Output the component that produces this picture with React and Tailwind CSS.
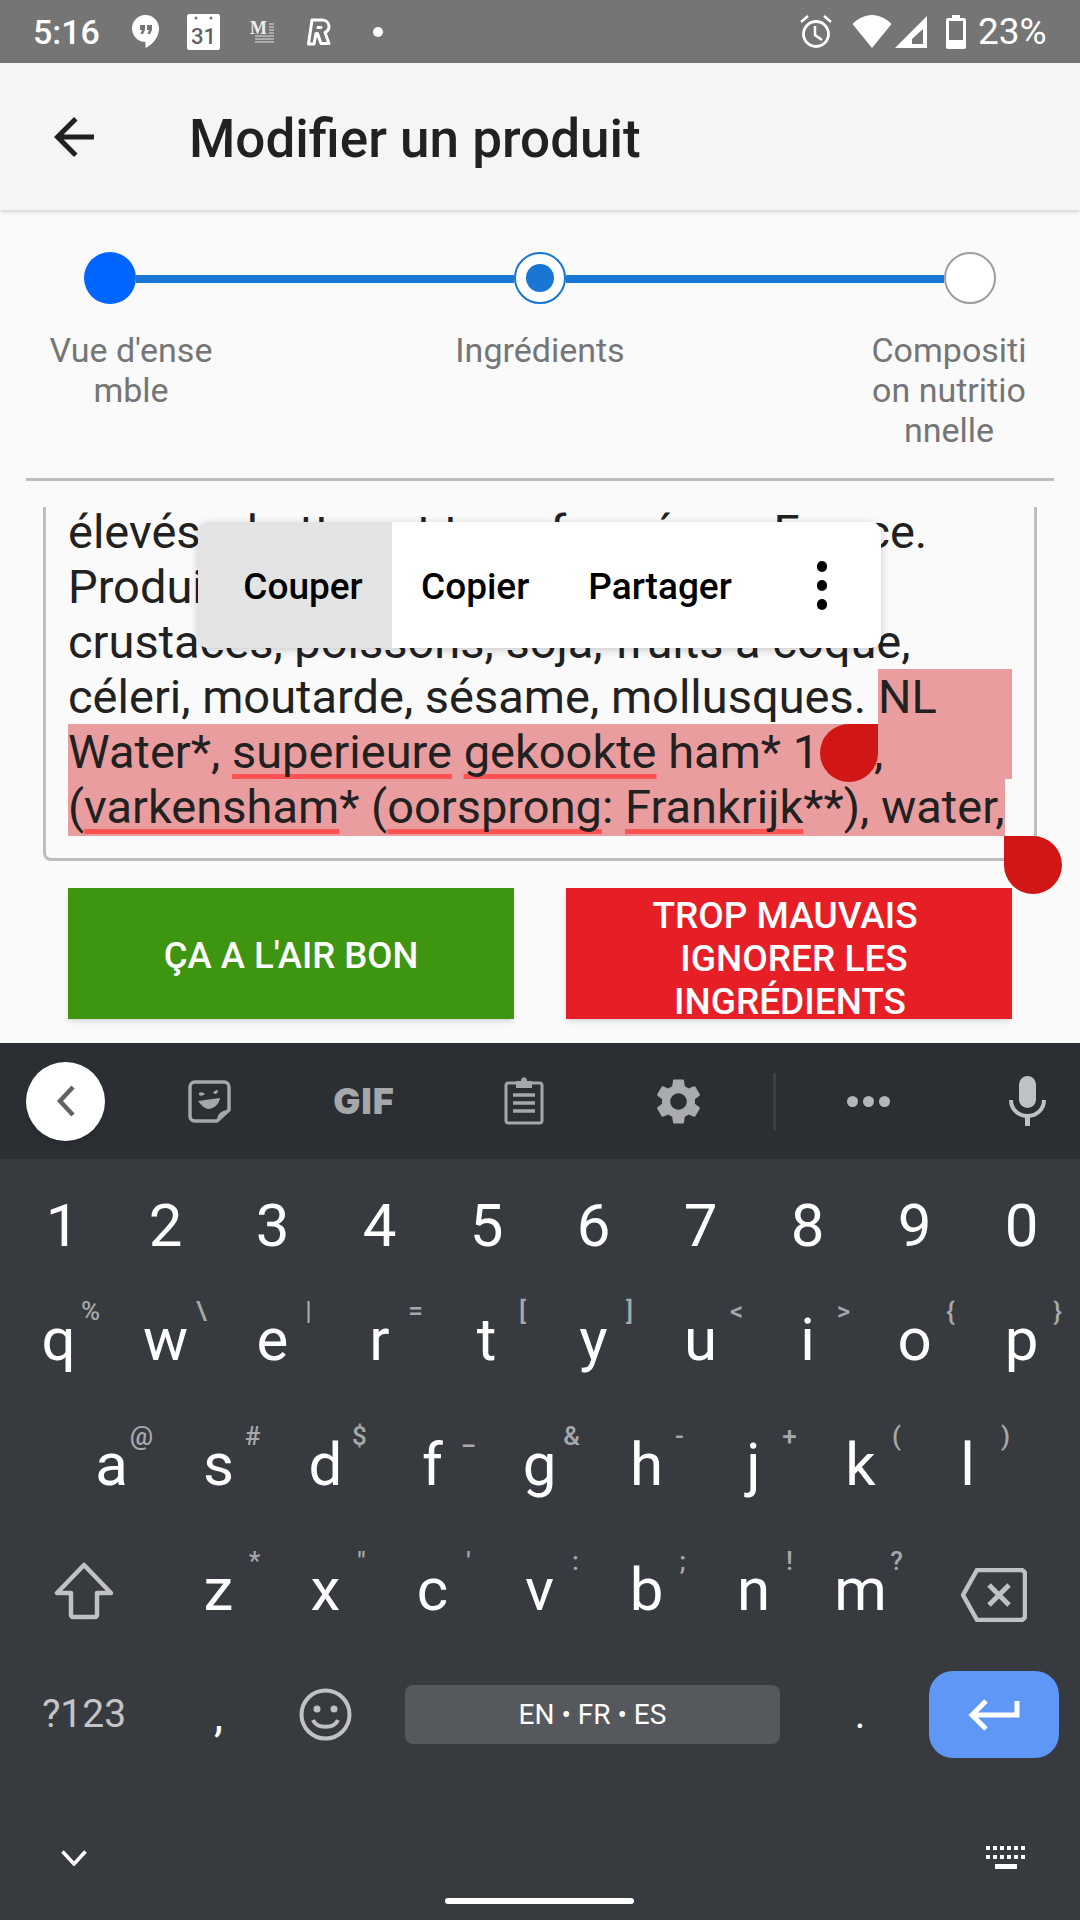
import React from 'react';

const FONT = { fontFamily: 'Roboto, sans-serif' };

const digits = ['1', '2', '3', '4', '5', '6', '7', '8', '9', '0'];
const row1 = [['q', '%', 'left-[calc(50%+32px)]'], ['w', '\\'], ['e', '|'], ['r', '='], ['t', '['], ['y', ']'], ['u', '<'], ['i', '>'], ['o', '{'], ['p', '}']];
const row2 = [['a', '@', 'left-[calc(50%+30px)]'], ['s', '#', 'left-[calc(50%+34px)]'], ['d', '$', 'left-[calc(50%+34px)]'], ['f', '_'], ['g', '&', 'left-[calc(50%+32px)]'], ['h', '-', 'left-[calc(50%+33px)]'], ['j', '+'], ['k', '('], ['l', ')', 'left-[calc(50%+38px)]']];
const row3 = [['z', '*'], ['x', '"'], ['c', "'"], ['v', ':'], ['b', ';'], ['n', '!'], ['m', '?']];

const Key = ({ label, hint, hintPos = 'left-[calc(50%+36px)]' }) => (
  <div className="relative w-[107px] h-full flex items-center justify-center text-[60px] text-white leading-none">
    {label}
    {hint && (
      <span className={`absolute ${hintPos} top-[20px] -translate-x-1/2 text-[26px] font-medium leading-[28px] text-[#a6a8aa]`}>
        {hint}
      </span>
    )}
  </div>
);

const Underlined = ({ children }) => (
  <span className="underline decoration-[#ff5252] decoration-[5px] underline-offset-[6px] [text-decoration-skip-ink:none]">
    {children}
  </span>
);

const StatusBar = () => (
  <div className="h-[63px] bg-[#757575] flex items-center text-white shrink-0">
    <span className="ml-[33px] w-[66px] text-[34px] font-medium leading-none">5:16</span>
    <svg className="ml-[33px]" width="27" height="33" viewBox="0 0 27 33">
      <path fill="#fff" d="M13.5 0C6 0 0 6 0 13.5S6 27 13.5 27v6c7-3.5 13.5-10.500 13.500-19.500C27 6 21 0 13.500 0z" />
      <path fill="#757575" d="M8 10h5v5l-2 4H8.500l1.500-4H8zM15 10h5v5l-2 4h-2.500l1.500-4h-2z" />
    </svg>
    <svg className="ml-[28px]" width="33" height="36" viewBox="0 0 33 36">
      <path fill="#fff" d="M2 0h29c1 0 2 1 2 2v32c0 1-1 2-2 2H2c-1 0-2-1-2-2V2c0-1 1-2 2-2z" />
      <circle cx="9" cy="4" r="1.500" fill="#757575" />
      <circle cx="24" cy="4" r="1.500" fill="#757575" />
      <text x="16.500" y="30" textAnchor="middle" fontSize="22" fontWeight="500" fill="#616161" fontFamily="Roboto, sans-serif">31</text>
    </svg>
    <svg className="ml-[30px]" width="24" height="24" viewBox="0 0 24 24">
      <text x="0" y="14" fontSize="18" fontWeight="700" fill="#eee" fontFamily="Liberation Serif, serif">M</text>
      <path stroke="#bdbdbd" strokeWidth="1.500" d="M19 4h5M19 7h5M19 10h5M19 13h5M5 16h19M5 19h19M5 22h19" />
    </svg>
    <svg className="ml-[33px]" width="24" height="28" viewBox="0 0 24 28">
      <path fill="none" stroke="#fff" strokeWidth="3" strokeLinejoin="round" d="M5 2h10c4 0 7 2.500 7 6.500 0 3-1.500 5-4 6l4 11h-8l-3.500-10H9L7 26H1.500z" />
      <path fill="#fff" d="M10 8h4c1 0 1.500.5 1.500 1.500S14 11 13 11H9.500z" />
    </svg>
    <span className="ml-[42px] w-[10px] h-[10px] rounded-full bg-white" />
    <svg className="ml-[417px]" width="32" height="33" viewBox="0 0 32 33">
      <path fill="none" stroke="#fff" strokeWidth="2.500" d="M1 7l7-6M31 7l-7-6" />
      <circle cx="16" cy="19" r="12.500" fill="none" stroke="#fff" strokeWidth="2.800" />
      <path fill="none" stroke="#fff" strokeWidth="2.500" d="M15 11v9l7 5" />
    </svg>
    <svg className="ml-[20px]" width="40" height="33" viewBox="0 0 40 33">
      <path fill="#fff" d="M20 33L0.500 9C6 3.500 12.500 0 20 0s14 3.500 19.500 9z" />
    </svg>
    <svg className="ml-[3px]" width="32" height="32" viewBox="0 0 32 32">
      <path fill="#fff" fillRule="evenodd" d="M0 32L32 0v32zM17 28h11V13l-11 10z" />
    </svg>
    <svg className="ml-[19px]" width="20" height="34" viewBox="0 0 20 34">
      <path fill="#fff" fillRule="evenodd" d="M6 0h8v3h4c1 0 2 1 2 2v27c0 1-1 2-2 2H2c-1 0-2-1-2-2V5c0-1 1-2 2-2h4zM3 6v19h14V6z" />
    </svg>
    <span className="ml-[12px] text-[37px] leading-none">23%</span>
  </div>
);

const AppBar = () => (
  <div className="relative z-10 h-[147px] bg-[#f5f5f5] shadow-[0_2px_4px_rgba(0,0,0,0.15)] flex items-center shrink-0">
    <svg className="ml-[44px]" width="60" height="60" viewBox="0 0 24 24">
      <path fill="#212121" d="M20 11H7.830l5.590-5.590L12 4l-8 8 8 8 1.410-1.410L7.830 13H20v-2z" />
    </svg>
    <h1 className="ml-[85px] mt-[5px] text-[53px] font-medium text-[#212121] leading-none">Modifier un produit</h1>
  </div>
);

const Stepper = () => (
  <div className="pt-[42px] shrink-0">
    <div className="flex items-center px-[84px]">
      <div className="w-[52px] h-[52px] rounded-full bg-[#0066ff]" />
      <div className="flex-1 h-[8px] mt-[2px] bg-[#1976d2]" />
      <div className="w-[52px] h-[52px] rounded-full border-2 border-[#1976d2] bg-white flex items-center justify-center">
        <div className="w-[28px] h-[28px] rounded-full bg-[#1976d2]" />
      </div>
      <div className="flex-1 h-[8px] mt-[2px] bg-[#1976d2]" />
      <div className="w-[52px] h-[52px] rounded-full border-2 border-[#9e9e9e] bg-white" />
    </div>
    <div className="mt-[26px] flex justify-between px-[40px] h-[120px] text-[34px] leading-[40px] text-[#757575] text-center">
      <div className="w-[182px]">Vue d'ense<br />mble</div>
      <div className="w-[182px]">Ingrédients</div>
      <div className="w-[182px]">Compositi<br />on nutritio<br />nnelle</div>
    </div>
  </div>
);

const TextArea = () => (
  <div className="mt-[26px] mx-[43px] h-[354px] border-x-[3px] border-b-[3px] border-[#bdbdbd] rounded-b-[8px] overflow-hidden text-[47px] leading-[55px] text-[#212121] shrink-0">
    <div className="-mt-[3px] ml-[22px] w-[944px] whitespace-pre">
      <div className="h-[55px]">élevés, abattus et transformés en France.</div>
      <div className="h-[55px]">Produit dans un atelier qui utilise :</div>
      <div className="h-[55px]">crustacés, poissons, soja, fruits à coque,</div>
      <div className="h-[55px] flex">
        <span className="w-[810px]">céleri, moutarde, sésame, mollusques. </span>
        <span className="flex-1 bg-[#ea9d9f]">NL</span>
      </div>
      <div className="h-[55px] bg-[#ea9d9f]">
        Water*, <Underlined>superieure</Underlined> <Underlined>gekookte</Underlined> ham* 18<span className="-ml-[6px]">%,</span>
      </div>
      <div className="h-[57px] w-[937px] bg-[#ea9d9f]">
        (<Underlined>varkensham</Underlined>* (<Underlined>oorsprong</Underlined>: <Underlined>Frankrijk</Underlined>**), water,
      </div>
    </div>
  </div>
);

const Buttons = () => (
  <div className="mt-[27px] flex gap-[52px] px-[68px] shrink-0 text-white text-[36.5px] font-medium leading-[43px] text-center">
    <div className="w-[446px] h-[131px] bg-[#3d9510] shadow-md flex items-center justify-center pt-[4px]">ÇA A L'AIR BON</div>
    <div className="w-[446px] h-[131px] bg-[#e61e25] shadow-md pt-[6px] text-[37px]">
      <div className="pr-[8px]">TROP MAUVAIS</div>
      <div className="pl-[10px]">IGNORER LES</div>
      <div className="pl-[2px]">INGRÉDIENTS</div>
    </div>
  </div>
);

const Toolbar = () => (
  <div className="h-[116px] bg-[#2b2f33] flex items-center shrink-0">
    <div className="ml-[26px] w-[79px] h-[79px] rounded-full bg-white shadow-md flex items-center justify-center">
      <svg width="24" height="34" viewBox="0 0 24 34">
        <path fill="none" stroke="#5f6368" strokeWidth="4.500" d="M19 3L6 17l13 14" />
      </svg>
    </div>
    <svg className="ml-[83px]" width="43" height="43" viewBox="0 0 43 43">
      <path fill="none" stroke="#a5a7a9" strokeWidth="3.500" strokeLinejoin="round" d="M7 2h29c3 0 5 2 5 5v23L29 41H7c-3 0-5-2-5-5V7c0-3 2-5 5-5z" />
      <path fill="#a5a7a9" d="M29 41c0-7 4-11 12-11zM11 13c3-1 5 0 6 1-2 2-5 2-6 1zM25 13c1-2 3-3 5-3 0 2-1 4-3 4zM10 21l22-3c-1 7-7 11-12 11-4-1-7-4-10-8z" />
    </svg>
    <div className="ml-[102px] w-[62px] text-center text-[36px] font-black text-[#a5a7a9] leading-none font-['Inter'] tracking-[1px]">GIF</div>
    <svg className="ml-[109px]" width="40" height="48" viewBox="0 0 40 48">
      <path fill="none" stroke="#a5a7a9" strokeWidth="3" strokeLinejoin="round" d="M4 6h32c1 0 2 1 2 2v36c0 1-1 2-2 2H4c-1 0-2-1-2-2V8c0-1 1-2 2-2z" />
      <path fill="#a5a7a9" d="M12 4h5c0-5 6-5 6 0h5v7H12z" />
      <path stroke="#a5a7a9" strokeWidth="3.500" d="M9 18h22M9 26h22M9 34h22" />
    </svg>
    <svg className="ml-[107px]" width="55" height="55" viewBox="0 0 24 24">
      <path fill="#a9abad" d="M19.140 12.940c.04-.3.06-.61.06-.94 0-.32-.02-.64-.07-.94l2.030-1.580a.49.49 0 0 0 .12-.61l-1.920-3.320a.488.488 0 0 0-.59-.22l-2.390.96c-.5-.38-1.030-.7-1.620-.94l-.36-2.540a.484.484 0 0 0-.48-.41h-3.840c-.24 0-.43.17-.47.41l-.36 2.540c-.59.24-1.130.57-1.620.94l-2.390-.96c-.22-.08-.47 0-.59.22L2.740 8.870c-.12.21-.08.47.12.61l2.030 1.580c-.05.3-.09.63-.09.94s.02.64.07.94l-2.030 1.580a.49.49 0 0 0-.12.61l1.920 3.320c.12.22.37.29.59.22l2.390-.96c.5.38 1.030.7 1.620.94l.36 2.540c.05.24.24.41.48.41h3.840c.24 0 .44-.17.47-.41l.36-2.540c.59-.24 1.130-.56 1.620-.94l2.390.96c.22.08.47 0 .59-.22l1.920-3.320c.12-.22.07-.47-.12-.61l-2.010-1.580zM12 15.600c-1.980 0-3.600-1.620-3.600-3.600s1.620-3.600 3.600-3.600 3.600 1.620 3.600 3.600-1.620 3.600-3.600 3.600z" />
    </svg>
    <div className="ml-[67px] w-[3px] h-[57px] bg-[#3c4043]" />
    <div className="ml-[71px] flex gap-[5px]">
      <span className="w-[11px] h-[11px] rounded-full bg-[#b4b6b8]" />
      <span className="w-[11px] h-[11px] rounded-full bg-[#b4b6b8]" />
      <span className="w-[11px] h-[11px] rounded-full bg-[#b4b6b8]" />
    </div>
    <svg className="ml-[119px]" width="37" height="50" viewBox="0 0 37 50">
      <rect x="10" y="0" width="17" height="32" rx="8.500" fill="#c0c1c3" />
      <path fill="none" stroke="#c0c1c3" strokeWidth="4" d="M2 24c0 9 7 16 16.500 16S35 33 35 24" />
      <rect x="16" y="40" width="5" height="10" fill="#c0c1c3" />
    </svg>
  </div>
);

const Keyboard = () => (
  <div className="flex-1 bg-[#373b3f] shrink-0" style={FONT}>
    <div className="h-[118px] pt-[15px] px-[5px] flex">
      {digits.map((d) => <Key key={d} label={<span className={d === '1' ? 'pl-[8px]' : ''}>{d}</span>} />)}
    </div>
    <div className="h-[125px] px-[5px] flex">
      {row1.map(([k, h, p]) => <Key key={k} label={k} hint={h} hintPos={p} />)}
    </div>
    <div className="h-[125px] px-[58px] flex">
      {row2.map(([k, h, p]) => <Key key={k} label={k} hint={h} hintPos={p} />)}
    </div>
    <div className="h-[125px] flex">
      <div className="w-[168px] pt-[3px] flex items-center justify-center">
        <svg width="60" height="58" viewBox="0 0 60 58">
          <path fill="none" stroke="#c0c1c3" strokeWidth="4.500" strokeLinejoin="round" d="M30 3L3 31h14v22c0 1 1 2 2 2h22c1 0 2-1 2-2V31h14z" />
        </svg>
      </div>
      <div className="-ml-[3px] flex h-full">
        {row3.map(([k, h]) => <Key key={k} label={k} hint={h} />)}
      </div>
      <div className="w-[160px] pt-[10px] flex items-center justify-center">
        <svg width="66" height="54" viewBox="0 0 66 54">
          <path fill="none" stroke="#c0c1c3" strokeWidth="4.500" strokeLinejoin="round" d="M16 2h44c2 0 4 2 4 4v42c0 2-2 4-4 4H16L2 27z" />
          <path fill="none" stroke="#c0c1c3" strokeWidth="5" d="M28 17l20 20M48 17L28 37" />
        </svg>
      </div>
    </div>
    <div className="h-[125px] flex items-center">
      <div className="w-[168px] text-center text-[39px] text-[#c4c5c6] leading-none">?123</div>
      <div className="-ml-[3px] w-[107px] text-center text-[46px] text-white leading-none">,</div>
      <div className="w-[107px] flex justify-center">
        <svg width="53" height="53" viewBox="0 0 53 53">
          <circle cx="26.500" cy="26.500" r="24" fill="none" stroke="#c0c1c3" strokeWidth="4" />
          <circle cx="18" cy="21" r="3.500" fill="#c0c1c3" />
          <circle cx="35" cy="21" r="3.500" fill="#c0c1c3" />
          <path fill="none" stroke="#c0c1c3" strokeWidth="4" d="M14 32c4 9 21 9 25 0" />
        </svg>
      </div>
      <div className="ml-[26px] w-[375px] h-[59px] rounded-[8px] bg-[#55585d] flex items-center justify-center text-[28px] text-white">EN • FR • ES</div>
      <div className="w-[149px] pl-[11px] text-center text-[40px] text-white leading-none">.</div>
      <div className="w-[130px] h-[87px] rounded-[24px] bg-[#5e97f6] flex items-center justify-center">
        <svg width="52" height="32" viewBox="0 0 52 32">
          <path fill="none" stroke="#fff" strokeWidth="5" d="M49 2v14H6M18 2L4 16l14 14" />
        </svg>
      </div>
    </div>
    <div className="relative h-[143px]">
      <svg className="absolute left-[61px] top-[73px]" width="26" height="16" viewBox="0 0 26 16">
        <path fill="none" stroke="#fff" strokeWidth="3.500" d="M1.500 1.500L13 14 24.500 1.500" />
      </svg>
      <svg className="absolute left-[986px] top-[69px]" width="41" height="23" viewBox="0 0 41 23">
        <path stroke="#fff" strokeWidth="4" strokeDasharray="4 3" d="M0 2h41M0 11h41" />
        <rect x="9" y="18" width="22" height="5" fill="#fff" />
      </svg>
      <div className="absolute left-[445px] top-[121px] w-[189px] h-[6px] rounded-full bg-white" />
    </div>
  </div>
);

export default function App() {
  return (
    <div className="relative w-[1080px] h-[1920px] overflow-hidden bg-[#fafafa] flex flex-col" style={FONT}>
      <StatusBar />
      <AppBar />
      <Stepper />
      <div className="mt-[28px] mx-[26px] h-[3px] bg-[#bdbdbd] shrink-0" />
      <TextArea />
      <Buttons />
      <div className="h-[24px] shrink-0" />
      <Toolbar />
      <Keyboard />

      {/* selection toolbar */}
      <div className="absolute left-[198px] top-[522px] w-[683px] h-[126px] bg-white rounded-[10px] shadow-[0_2px_8px_rgba(0,0,0,0.2)] overflow-hidden flex items-center text-[37px] font-medium text-black leading-none">
        <div className="w-[194px] h-full pl-[16px] pt-[2px] bg-[#e3e3e3] flex items-center justify-center">Couper</div>
        <span className="ml-[29px] pt-[2px]">Copier</span>
        <span className="ml-[59px] pt-[2px]">Partager</span>
        <div className="ml-[85px] flex flex-col gap-[8px]">
          <span className="w-[10px] h-[11px] rounded-full bg-black" />
          <span className="w-[10px] h-[11px] rounded-full bg-black" />
          <span className="w-[10px] h-[11px] rounded-full bg-black" />
        </div>
      </div>

      {/* selection handles */}
      <div className="absolute left-[820px] top-[724px] w-[58px] h-[58px] rounded-full rounded-tr-none bg-[#d01716]" />
      <div className="absolute left-[1004px] top-[836px] w-[58px] h-[58px] rounded-full rounded-tl-none bg-[#d01716]" />
    </div>
  );
}
